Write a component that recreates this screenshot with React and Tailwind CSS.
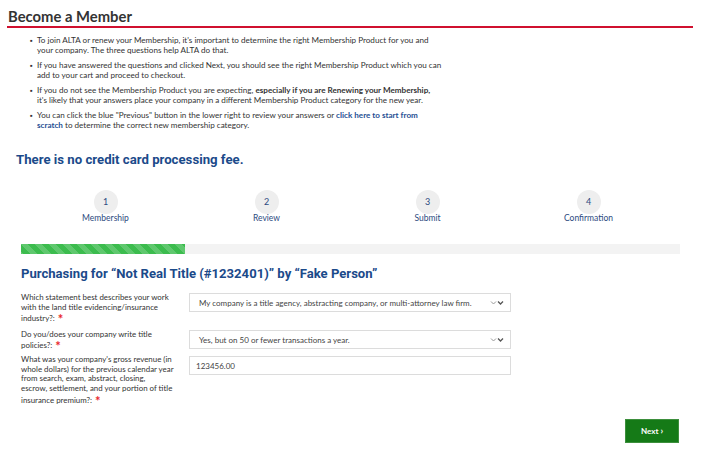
import React from "react";

const body = { fontFamily: "Lato, 'Open Sans', sans-serif" };
const head = { fontFamily: "Roboto, Inter, sans-serif" };

function Chevrons() {
  return (
    <svg width="14" height="6" viewBox="0 0 14 6" className="shrink-0">
      <path d="M1 1.5 L3.5 4 L6 1.5" fill="none" stroke="#9a9a9a" strokeWidth="1" />
      <path d="M8 1.5 L10.5 4 L13 1.5" fill="none" stroke="#555" strokeWidth="1.3" />
    </svg>
  );
}

function Star() {
  return <span className="text-[#e8262b] text-[13px] leading-[8px] font-bold inline-block translate-y-[3px] ml-[3px]">*</span>;
}

function Lines({ lines, star }) {
  return (
    <>
      {lines.map((l, i) => (
        <div key={i} className="whitespace-nowrap">
          {l}
          {star && i === lines.length - 1 ? <Star /> : null}
        </div>
      ))}
    </>
  );
}

export default function App() {
  const bullets = [
    [
      "To join ALTA or renew your Membership, it's important to determine the right Membership Product for you and",
      "your company. The three questions help ALTA do that.",
    ],
    [
      "If you have answered the questions and clicked Next, you should see the right Membership Product which you can",
      "add to your cart and proceed to checkout.",
    ],
  ];
  return (
    <div className="w-[720px] h-[455px] bg-white overflow-hidden text-[#333]" style={body}>
      <div className="pt-[7px] pl-[8px] w-[693px]">
        <div className="text-[14.8px] font-bold leading-[18px] text-[#333]">Become a Member</div>
        <div className="h-[2px] bg-[#d0102f] mt-[1px] -ml-[1px]" />
      </div>

      <ul className="mt-[7px] pl-[30px] flex flex-col gap-[5px] text-[8.1px] leading-[10px]">
        {bullets.map((b, i) => (
          <li key={i} className="flex">
            <span className="w-[7px] shrink-0 text-[7px]">▪</span>
            <span className="whitespace-nowrap">
              {b[0]}
              <br />
              {b[1]}
            </span>
          </li>
        ))}
        <li className="flex">
          <span className="w-[7px] shrink-0 text-[7px]">▪</span>
          <span className="whitespace-nowrap">
            If you do not see the Membership Product you are expecting, <b>especially if you are Renewing your Membership,</b>
            <br />
            it's likely that your answers place your company in a different Membership Product category for the new year.
          </span>
        </li>
        <li className="flex">
          <span className="w-[7px] shrink-0 text-[7px]">▪</span>
          <span className="whitespace-nowrap">
            You can click the blue "Previous" button in the lower right to review your answers or{" "}
            <b className="text-[#1f4f93]">click here to start from</b>
            <br />
            <b className="text-[#1f4f93]">scratch</b> to determine the correct new membership category.
          </span>
        </li>
      </ul>

      <div className="mt-[22px] pl-[16px] text-[13.2px] font-bold text-[#1b4a8a] leading-[16px]" style={head}>
        There is no credit card processing fee.
      </div>

      <div className="mt-[22px] ml-[25px] w-[644px] grid grid-cols-4">
        {["Membership", "Review", "Submit", "Confirmation"].map((l, i) => (
          <div key={l} className="flex flex-col items-center">
            <div className="w-[24px] h-[24px] rounded-full bg-[#eeeeee] flex items-center justify-center text-[9px] text-[#2c4a80]">
              {i + 1}
            </div>
            <div className="text-[8.5px] leading-[10px] text-[#2c4a80] mt-[-1px]">{l}</div>
          </div>
        ))}
      </div>

      <div className="mt-[21px] ml-[21px] w-[659px] h-[10px] bg-[#f3f3f3] flex">
        <div
          className="w-[164px] h-full"
          style={{
            backgroundColor: "#3cbc4e",
            backgroundImage:
              "linear-gradient(45deg, rgba(255,255,255,0.18) 25%, transparent 25%, transparent 50%, rgba(255,255,255,0.18) 50%, rgba(255,255,255,0.18) 75%, transparent 75%, transparent)",
            backgroundSize: "14px 14px",
          }}
        />
      </div>

      <div className="mt-[12px] pl-[21px] text-[13.1px] font-bold text-[#1b4a8a] leading-[16px]" style={head}>
        Purchasing for “Not Real Title (#1232401)” by “Fake Person”
      </div>

      <div className="mt-[11px] pl-[21px] flex flex-col text-[7.9px]">
        <div className="flex gap-[14px]">
          <div className="w-[154px] leading-[10px] -mt-[1px]">
            <Lines
              star
              lines={["Which statement best describes your work", "with the land title evidencing/insurance", "industry?:"]}
            />
          </div>
          <div className="w-[322px] h-[19px] border border-[#dcdcdc] flex items-center justify-between pl-[9px] pr-[6px] text-[8px] text-[#444]">
            <span>My company is a title agency, abstracting company, or multi-attorney law firm.</span>
            <Chevrons />
          </div>
        </div>
        <div className="flex gap-[14px] mt-[7px]">
          <div className="w-[154px] leading-[10px] -mt-[1px]">
            <Lines star lines={["Do you/does your company write title", "policies?:"]} />
          </div>
          <div className="w-[322px] h-[19px] border border-[#dcdcdc] flex items-center justify-between pl-[9px] pr-[6px] text-[8px] text-[#444]">
            <span>Yes, but on 50 or fewer transactions a year.</span>
            <Chevrons />
          </div>
        </div>
        <div className="flex gap-[14px] mt-[6px]">
          <div className="w-[154px] leading-[9.7px] -mt-[1px]">
            <Lines
              star
              lines={[
                "What was your company's gross revenue (in",
                "whole dollars) for the previous calendar year",
                "from search, exam, abstract, closing,",
                "escrow, settlement, and your portion of title",
                "insurance premium?:",
              ]}
            />
          </div>
          <div className="w-[322px] h-[19px] border border-[#dcdcdc] flex items-center pl-[6px] text-[8px] text-[#444]">
            123456.00
          </div>
        </div>
      </div>

      <div className="flex justify-end pr-[41px] mt-[13px]">
        <button className="w-[54px] h-[24px] bg-[#157a17] border border-[#3d8f3d] text-white text-[8px] font-bold flex items-center justify-center gap-[2px]">
          Next <span className="text-[9px]">›</span>
        </button>
      </div>
    </div>
  );
}
